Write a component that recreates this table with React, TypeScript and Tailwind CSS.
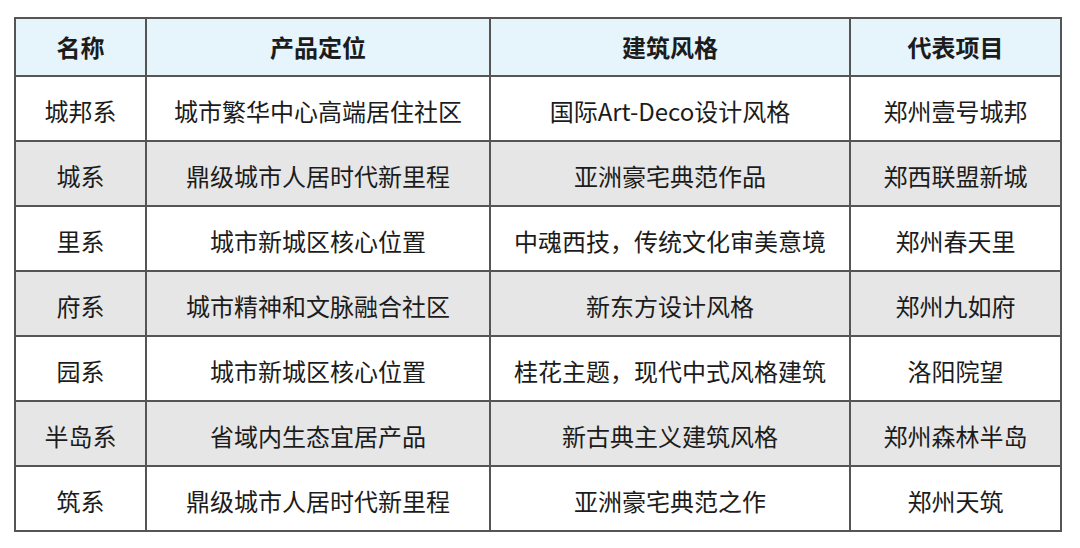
const headers = ["名称", "产品定位", "建筑风格", "代表项目"];

const rows = [
  ["城邦系", "城市繁华中心高端居住社区", "国际Art-Deco设计风格", "郑州壹号城邦"],
  ["城系", "鼎级城市人居时代新里程", "亚洲豪宅典范作品", "郑西联盟新城"],
  ["里系", "城市新城区核心位置", "中魂西技，传统文化审美意境", "郑州春天里"],
  ["府系", "城市精神和文脉融合社区", "新东方设计风格", "郑州九如府"],
  ["园系", "城市新城区核心位置", "桂花主题，现代中式风格建筑", "洛阳院望"],
  ["半岛系", "省域内生态宜居产品", "新古典主义建筑风格", "郑州森林半岛"],
  ["筑系", "鼎级城市人居时代新里程", "亚洲豪宅典范之作", "郑州天筑"],
];

const widths = ["w-[131px]", "w-[344px]", "w-[360px]", "w-[211px]"];

export default function App() {
  return (
    <div
      className="w-[1080px] h-[548px] bg-white pl-[14px] pt-[17px]"
      style={{ fontFamily: '"Noto Sans CJK SC", "Noto Sans", sans-serif' }}
    >
      <table className="border-collapse border-2 border-[#555] text-[24px] text-[#1c1c1c]">
        <thead>
          <tr className="h-[58px] bg-[#e6f4fc]">
            {headers.map((h, i) => (
              <th key={h} className={`${widths[i]} border-2 border-[#555] font-bold text-center p-0`}>
                {h}
              </th>
            ))}
          </tr>
        </thead>
        <tbody>
          {rows.map((r, ri) => (
            <tr key={ri} className={`h-[65px] ${ri % 2 === 1 ? "bg-[#e6e6e6]" : "bg-white"}`}>
              {r.map((c, ci) => (
                <td key={ci} className="border-2 border-[#555] text-center p-0 pt-[4px]">
                  {c}
                </td>
              ))}
            </tr>
          ))}
        </tbody>
      </table>
    </div>
  );
}
